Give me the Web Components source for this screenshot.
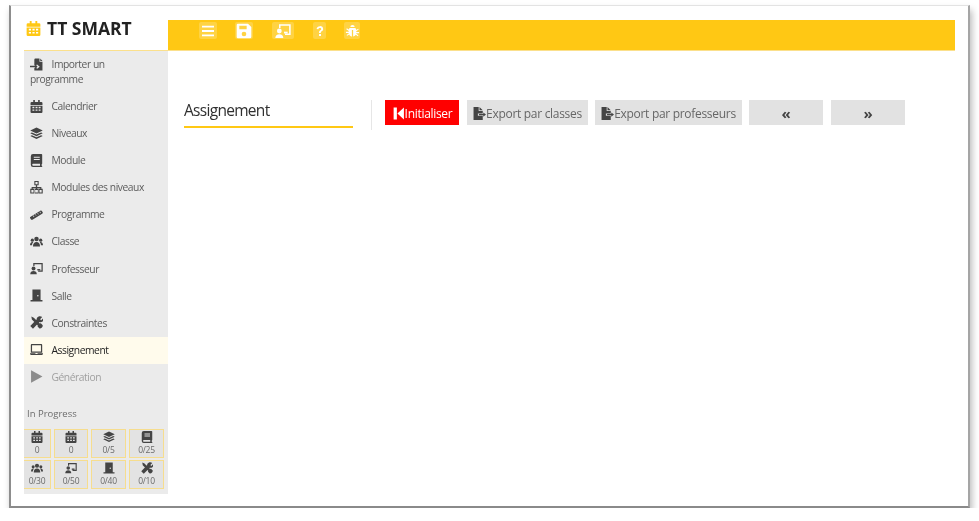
<!DOCTYPE html>
<html lang="fr">
<head>
<meta charset="utf-8">
<title>TT SMART</title>
<style>
  html, body { margin: 0; background: #fff; }
  body { font-family: "Open Sans", "Liberation Sans", sans-serif; overflow: hidden; }
</style>
</head>
<body>
<tt-window>
  <tt-brand slot="brand">TT SMART</tt-brand>
  <tt-toolbar slot="toolbar">
    <tt-tool icon="bars" w="18"></tt-tool>
    <tt-tool icon="save" w="18"></tt-tool>
    <tt-tool icon="teacher" w="22" style="margin-left:1px"></tt-tool>
    <tt-tool icon="question" w="13" style="margin-left:1px"></tt-tool>
    <tt-tool icon="bug" w="16"></tt-tool>
  </tt-toolbar>
  <tt-sidebar slot="sidebar">
    <tt-nav-item icon="import" class="tall">Importer un programme</tt-nav-item>
    <tt-nav-item icon="calendar">Calendrier</tt-nav-item>
    <tt-nav-item icon="layers">Niveaux</tt-nav-item>
    <tt-nav-item icon="book">Module</tt-nav-item>
    <tt-nav-item icon="sitemap">Modules des niveaux</tt-nav-item>
    <tt-nav-item icon="ruler">Programme</tt-nav-item>
    <tt-nav-item icon="users">Classe</tt-nav-item>
    <tt-nav-item icon="teacher">Professeur</tt-nav-item>
    <tt-nav-item icon="door">Salle</tt-nav-item>
    <tt-nav-item icon="tools">Constraintes</tt-nav-item>
    <tt-nav-item icon="laptop" active>Assignement</tt-nav-item>
    <tt-nav-item icon="play" disabled>Génération</tt-nav-item>
    <tt-progress>
      <tt-stat icon="calendar" class="first">0</tt-stat>
      <tt-stat icon="calendar">0</tt-stat>
      <tt-stat icon="layers">0/5</tt-stat>
      <tt-stat icon="book">0/25</tt-stat>
      <tt-stat icon="users" class="first">0/30</tt-stat>
      <tt-stat icon="teacher">0/50</tt-stat>
      <tt-stat icon="door">0/40</tt-stat>
      <tt-stat icon="tools">0/10</tt-stat>
    </tt-progress>
  </tt-sidebar>
  <tt-heading>Assignement</tt-heading>
  <tt-button slot="actions" kind="danger" icon="first" w="74">Initialiser</tt-button>
  <tt-button slot="actions" icon="export" w="121" style="margin-left:8px">Export par classes</tt-button>
  <tt-button slot="actions" icon="export" w="147" style="margin-left:7px">Export par professeurs</tt-button>
  <tt-button slot="actions" w="74" style="margin-left:7px"><b>«</b></tt-button>
  <tt-button slot="actions" w="74" style="margin-left:8px"><b>»</b></tt-button>
</tt-window>

<script>
const ICONS = {
  bars: '<path d="M3 4h18v2.800H3zM3 10.600h18v2.800H3zM3 17.200h18V20H3z"/>',
  save: '<path fill-rule="evenodd" d="M3 1h15l5 5v15a2 2 0 0 1-2 2H3a2 2 0 0 1-2-2V3a2 2 0 0 1 2-2zm2 3v5.500h11V4zm7 9a3.500 3.500 0 1 0 0 7 3.500 3.500 0 0 0 0-7z"/>',
  teacher: '<circle cx="6.500" cy="12" r="3.600"/><path d="M.5 22.500c0-3.800 2.300-5.800 6-5.800s6 2 6 5.800z"/><path d="M6 2h17.500v16H15v-2.300h6.200V4.300H8.300V7.500H6z"/><path d="M13.500 13h5.500v2.700h-5.500z"/>',
  question: '<path d="M12 2.500c-3.900 0-6.500 2.200-6.800 5.600l3.600.5c.2-1.800 1.400-2.800 3-2.800 1.600 0 2.700.9 2.700 2.100 0 1.100-.6 1.700-2 2.700-1.800 1.300-2.500 2.500-2.500 4.400v.8h3.600v-.5c0-1.100.4-1.600 1.800-2.600 2-1.400 2.900-2.800 2.900-4.900 0-3.400-2.500-5.800-6.300-5.800zM10 18h4v3.800h-4z"/>',
  bug: '<path d="M8.500 6.500a3.500 3.500 0 0 1 7 0zM7.500 8h9c1 1 1.500 2 1.500 3l3-2 1 1.500-4 2.700v1.300h4.500v2H18v.6l3.500 2.400-1 1.500-3.200-2.200C16 20.500 14.500 21.500 13 21.500V11h-2v10.500c-1.500 0-3-1-4.300-3.200l-3.200 2.200-1-1.500L6 16.600V16H1.500v-2H6v-1.300L2 10l1-1.500 3 2c0-1 .5-2 1.500-2.500z"/>',
  import: '<path d="M10 1h7.500v6H23v16H8v-5h4.500v2.500L18 16l-5.500-4.500V14H8V3a2 2 0 0 1 2-2zm9 0l4 4.500h-4z"/><path d="M0 14.500h9.500V12l4.500 4-4.500 3.800V17H0z"/>',
  calendar: '<path fill-rule="evenodd" d="M6 0h3v3.500h6V0h3v3.500h3a2 2 0 0 1 2 2V9H1V5.500a2 2 0 0 1 2-2h3zM1 10.500h22V22a2 2 0 0 1-2 2H3a2 2 0 0 1-2-2zm3.500 2V15h3.500v-2.500zm5.800 0V15h3.500v-2.500zm5.700 0V15h3.500v-2.500zm-11.500 5V20h3.500v-2.500zm5.800 0V20h3.500v-2.500zm5.700 0V20h3.500v-2.500z"/>',
  layers: '<path d="M12 1l11.500 5.500L12 12 .5 6.500z"/><path d="M3.500 10l8.500 4 8.500-4 3 1.500L12 17 .5 11.500z"/><path d="M3.500 15l8.500 4 8.500-4 3 1.500L12 22 .5 16.500z"/>',
  book: '<path fill-rule="evenodd" d="M5.500 0H21a1.500 1.500 0 0 1 1.500 1.500v16a1.500 1.500 0 0 1-1 1.400v2.600a1.200 1.200 0 0 1 0 2.500h-16A4 4 0 0 1 1.500 20V4a4 4 0 0 1 4-4zm1.500 5v2h11V5zm0 4v2h11V9zM5.500 18a1.800 1.800 0 0 0 0 3.500h13V18z"/>',
  sitemap: '<path fill-rule="evenodd" d="M8 0h8v8h-2.800v3H21v3.500h2.500V23h-8v-8.500h3.500v-1.300h-5.800v1.300h2.800V23H7.500v-8.500h3.300v-1.300H5v1.300h3.500V23h-8v-8.500H3V11h7.800V8H8zm2 2v4h4V2zM2.500 16.500V21h4v-4.500zm7 0V21h5v-4.500zm8 0V21h4v-4.500z"/>',
  ruler: '<path d="M.5 16.500L19 5.200c1.300-.8 2.500-.5 3.200.6l1.200 2c.6 1.100.3 2.200-1 3L4.500 21.500c-1.300.7-2.300.4-3-.6L.2 18.500c-.4-.8-.3-1.500.3-2z"/><path fill="#ebebeb" d="M5.500 14.500l1.100-.7 1.500 2.400-1.100.7zM9.500 12.100l1.100-.7 1.500 2.400-1.100.7zM13.500 9.700l1.100-.7 1.500 2.400-1.100.7zM17.500 7.300l1.100-.7 1.500 2.400-1.100.7z"/>',
  users: '<circle cx="12" cy="7.500" r="4.200"/><circle cx="4.300" cy="9.500" r="3"/><circle cx="19.700" cy="9.500" r="3"/><path d="M5.500 21c0-5 2.300-8 6.500-8s6.500 3 6.500 8zM0 19c0-3.500 1.500-6 4.500-6 .6 0 1.100.1 1.500.3C4.500 14.800 3.900 16.600 3.800 19zM24 19c0-3.500-1.500-6-4.500-6-.6 0-1.100.1-1.500.3 1.500 1.500 2.100 3.300 2.200 5.700z"/>',
  door: '<path fill-rule="evenodd" d="M4.500 1h15v19.500H23V23H1v-2.500h3.500zm10 10a1.400 1.400 0 1 0 0 2.800 1.400 1.400 0 0 0 0-2.800z"/>',
  tools: '<path d="M2.500 1l4.500 2 11 11 2-.4 3.500 3.500c.5 3.300-2.800 6.500-6 6l-3.500-3.500.4-2L3.500 6.500z"/><path d="M16 .8c2.200-.8 4.800-.4 6.500 1.200l-3.800 3.800 2 2L24.500 4c.8 2.700 0 4.900-1.600 6.300-1.600 1.400-3.700 1.600-5.400 1L5.500 23.500.5 18.500l12-12.300c-.6-2.200 1-4.300 3.500-5.400z"/>',
  laptop: '<path fill-rule="evenodd" d="M3 2h18a1.500 1.500 0 0 1 1.500 1.500V18h-21V3.500A1.500 1.500 0 0 1 3 2zm.8 2.200v11.600h16.400V4.200z"/><path d="M0 19h9.500l1 1.200h3l1-1.200H24v1a2 2 0 0 1-2 2H2a2 2 0 0 1-2-2z"/>',
  play: '<path d="M2 .5L23 12 2 23.500z"/>',
  first: '<path d="M3 1h6v22H3zM22 1v22L10 12z"/>',
  export: '<path fill-rule="evenodd" d="M1 0h9.500v7.500H18v4.500H9v4h9v8H1zM12 0l6 6h-6z"/><path d="M11 12.800h8V10l5 4-5 4v-2.700h-8z"/>'
};

function svgIcon(name) {
  return `<svg viewBox="0 0 24 24" width="100%" height="100%" fill="currentColor" style="display:block">${ICONS[name] || ""}</svg>`;
}

class TtIcon extends HTMLElement {
  connectedCallback() {
    if (this.shadowRoot) return;
    this.attachShadow({ mode: "open" }).innerHTML = `
      <style>:host{display:inline-block;width:var(--icon-size,12px);height:var(--icon-size,12px);flex:none}</style>
      ${svgIcon(this.getAttribute("name"))}`;
  }
}
customElements.define("tt-icon", TtIcon);

class TtWindow extends HTMLElement {
  constructor() {
    super();
    this.attachShadow({ mode: "open" }).innerHTML = `
      <style>
        :host{
          display:block;box-sizing:border-box;
          width:961px;height:503px;margin:5px 0 0 9px;
          background:#fff;padding:14px 0 0 13px;
          border:1px solid #d6d6d6;border-left:2px solid #8d8d8d;border-right:2px solid #a5a5a5;border-bottom:2px solid #8a8a8a;border-top-color:#e3e3e3;
          box-shadow:2px 5px 7px rgba(0,0,0,.28);
          filter:blur(.35px);
        }
        .frame{display:grid;grid-template-columns:144px 787px;grid-template-rows:31px 443px}
        main{padding:49px 0 0 16px;display:flex;align-items:flex-start}
        .buttons{display:flex;margin-left:18px;padding:0 0 0 13px;border-left:1px solid #e6e6e6;height:30px}
      </style>
      <div class="frame">
        <slot name="brand"></slot>
        <slot name="toolbar"></slot>
        <slot name="sidebar"></slot>
        <main>
          <slot></slot>
          <div class="buttons"><slot name="actions"></slot></div>
        </main>
      </div>`;
  }
}
customElements.define("tt-window", TtWindow);

class TtBrand extends HTMLElement {
  constructor() {
    super();
    this.attachShadow({ mode: "open" }).innerHTML = `
      <style>
        :host{display:flex;align-items:flex-start;gap:6px;padding:0 0 0 2px;box-sizing:border-box;border-bottom:1px solid #fbe08c;
          font-size:17.500px;font-weight:700;color:#222;line-height:17px;height:31px;--icon-size:15px}
        tt-icon{color:#ffc814;margin-top:1px}
      </style>
      <tt-icon name="calendar"></tt-icon><slot></slot>`;
  }
}
customElements.define("tt-brand", TtBrand);

class TtToolbar extends HTMLElement {
  constructor() {
    super();
    this.attachShadow({ mode: "open" }).innerHTML = `
      <style>
        :host{display:flex;align-items:flex-start;box-sizing:border-box;background:#ffc814;border-bottom:1px solid #fbe08c;padding:2px 0 0 31px;gap:18px}
      </style>
      <slot></slot>`;
  }
}
customElements.define("tt-toolbar", TtToolbar);

class TtTool extends HTMLElement {
  connectedCallback() {
    if (this.shadowRoot) return;
    const w = this.getAttribute("w") || 18;
    this.attachShadow({ mode: "open" }).innerHTML = `
      <style>
        :host{display:flex;align-items:center;justify-content:center;width:${w}px;height:17px;background:rgba(255,255,255,.2);border-radius:2px;color:#fff;--icon-size:${Math.min(w - 1, 16)}px}
      </style>
      <tt-icon name="${this.getAttribute("icon")}"></tt-icon>`;
  }
}
customElements.define("tt-tool", TtTool);

class TtSidebar extends HTMLElement {
  constructor() {
    super();
    this.attachShadow({ mode: "open" }).innerHTML = `
      <style>
        :host{display:block;background:#ebebeb;height:443px;overflow:hidden}
      </style>
      <slot></slot>`;
  }
}
customElements.define("tt-sidebar", TtSidebar);

class TtNavItem extends HTMLElement {
  connectedCallback() {
    if (this.shadowRoot) return;
    const active = this.hasAttribute("active");
    const disabled = this.hasAttribute("disabled");
    const tall = this.classList.contains("tall");
    const color = disabled ? "#a0a0a0" : active ? "#222" : "#5c5c5c";
    this.attachShadow({ mode: "open" }).innerHTML = `
      <style>
        :host{display:block;box-sizing:border-box;height:${tall ? 42 : 27.1}px;
          padding:${tall ? "6px 40px 0 6px" : "0 4px 0 6px"};
          line-height:${tall ? 15 : 27}px;
          font-size:10.300px;color:${color};letter-spacing:-.45px;
          background:${active ? "#fffbec" : "transparent"};--icon-size:13px}
        tt-icon{color:${disabled ? "#8c8c8c" : "#444"};vertical-align:-2.500px;margin-right:8.500px}
      </style>
      <tt-icon name="${this.getAttribute("icon")}"></tt-icon><slot></slot>`;
  }
}
customElements.define("tt-nav-item", TtNavItem);

class TtProgress extends HTMLElement {
  constructor() {
    super();
    this.attachShadow({ mode: "open" }).innerHTML = `
      <style>
        :host{display:block;padding-top:16px}
        .label{font-size:9.500px;color:#6c6c6c;padding-left:3px;line-height:14px;margin-bottom:8px}
        .grid{display:grid;grid-template-columns:27px 34px 35px 35px;column-gap:3px;row-gap:2px;grid-auto-rows:29px}
      </style>
      <div class="label">In Progress</div>
      <div class="grid"><slot></slot></div>`;
  }
}
customElements.define("tt-progress", TtProgress);

class TtStat extends HTMLElement {
  connectedCallback() {
    if (this.shadowRoot) return;
    const first = this.classList.contains("first");
    this.attachShadow({ mode: "open" }).innerHTML = `
      <style>
        :host{display:flex;flex-direction:column;align-items:center;box-sizing:border-box;
          background:#e3e3e3;border:1px solid #f6dd8e;${first ? "border-left:0;" : ""}
          font-size:8.500px;letter-spacing:-.25px;color:#6a6a6a;line-height:13px;padding-top:1px;--icon-size:12px}
        tt-icon{color:#444}
      </style>
      <tt-icon name="${this.getAttribute("icon")}"></tt-icon><span><slot></slot></span>`;
  }
}
customElements.define("tt-stat", TtStat);

class TtHeading extends HTMLElement {
  constructor() {
    super();
    this.attachShadow({ mode: "open" }).innerHTML = `
      <style>
        :host{display:block;box-sizing:border-box;width:169px;height:28px;font-size:15.500px;letter-spacing:-.7px;line-height:20px;color:#2f2f2f;border-bottom:2px solid #ffc814;flex:none}
      </style>
      <slot></slot>`;
  }
}
customElements.define("tt-heading", TtHeading);

class TtButton extends HTMLElement {
  connectedCallback() {
    if (this.shadowRoot) return;
    const danger = this.getAttribute("kind") === "danger";
    const icon = this.getAttribute("icon");
    this.attachShadow({ mode: "open" }).innerHTML = `
      <style>
        :host{display:inline-flex;align-items:center;justify-content:center;box-sizing:border-box;
          width:${this.getAttribute("w")}px;height:25px;flex:none;padding-top:1px;
          background:${danger ? "#ff0000" : "#e2e2e2"};color:${danger ? "#fff" : "#666"};
          font-size:12px;letter-spacing:-.3px;white-space:nowrap;--icon-size:13px}
        tt-icon{color:${danger ? "#fff" : "#444"}}
        ::slotted(b){color:#444;font-size:15px;line-height:1}
      </style>
      ${icon ? `<tt-icon name="${icon}"></tt-icon>` : ""}<slot></slot>`;
  }
}
customElements.define("tt-button", TtButton);
</script>
</body>
</html>
